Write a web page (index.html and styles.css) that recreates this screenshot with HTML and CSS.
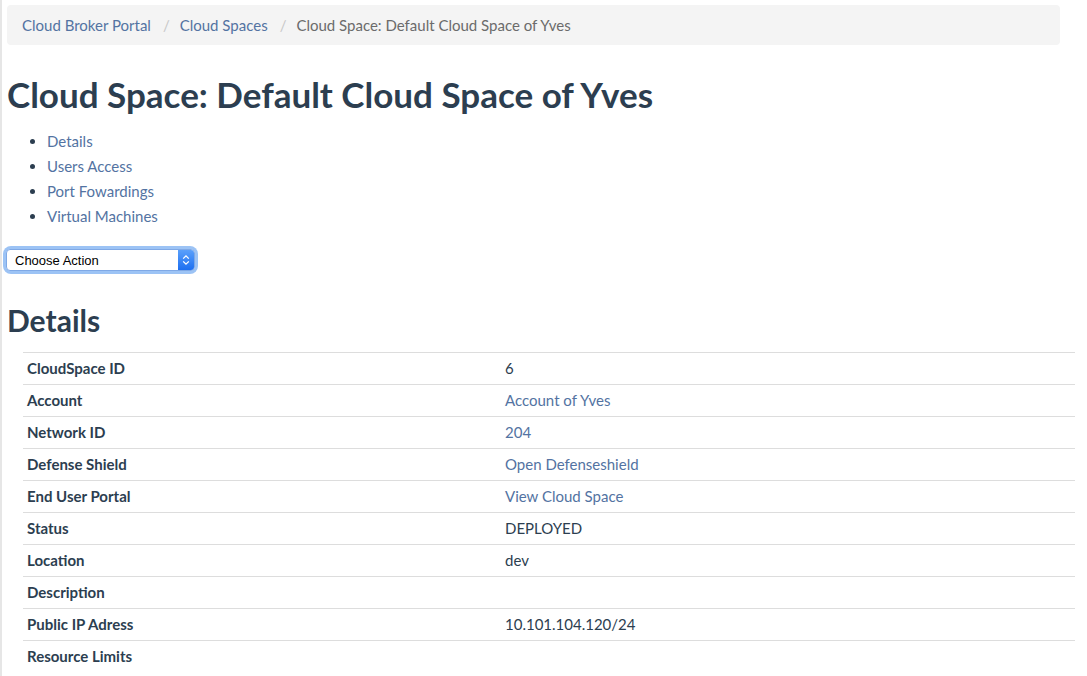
FILE: index.html
```html
<!DOCTYPE html>
<html>
<head>
<meta charset="utf-8">
<title>Cloud Space</title>
<link rel="stylesheet" href="styles.css">
</head>
<body>
<div class="page">
  <ol class="breadcrumb">
    <li><a href="#">Cloud Broker Portal</a></li>
    <li class="sep">/</li>
    <li><a href="#">Cloud Spaces</a></li>
    <li class="sep">/</li>
    <li class="active">Cloud Space: Default Cloud Space of Yves</li>
  </ol>

  <h1 class="title">Cloud Space: Default Cloud Space of Yves</h1>

  <ul class="toc">
    <li><a href="#">Details</a></li>
    <li><a href="#">Users Access</a></li>
    <li><a href="#">Port Fowardings</a></li>
    <li><a href="#">Virtual Machines</a></li>
  </ul>

  <div class="select-wrap">
    <select class="action-select">
      <option>Choose Action</option>
    </select>
    <span class="select-btn">
      <svg width="8" height="12" viewBox="0 0 8 12"><path d="M1.2 4.6 L4 1.8 L6.8 4.6" fill="none" stroke="#fff" stroke-width="1.3"/><path d="M1.2 7.4 L4 10.2 L6.8 7.4" fill="none" stroke="#fff" stroke-width="1.3"/></svg>
    </span>
  </div>

  <h2 class="section">Details</h2>

  <div class="details">
    <div class="row"><div class="k">CloudSpace ID</div><div class="v">6</div></div>
    <div class="row"><div class="k">Account</div><div class="v"><a href="#">Account of Yves</a></div></div>
    <div class="row"><div class="k">Network ID</div><div class="v"><a href="#">204</a></div></div>
    <div class="row"><div class="k">Defense Shield</div><div class="v"><a href="#">Open Defenseshield</a></div></div>
    <div class="row"><div class="k">End User Portal</div><div class="v"><a href="#">View Cloud Space</a></div></div>
    <div class="row"><div class="k">Status</div><div class="v">DEPLOYED</div></div>
    <div class="row"><div class="k">Location</div><div class="v">dev</div></div>
    <div class="row"><div class="k">Description</div><div class="v"></div></div>
    <div class="row"><div class="k">Public IP Adress</div><div class="v">10.101.104.120/24</div></div>
    <div class="row"><div class="k">Resource Limits</div><div class="v"></div></div>
  </div>
</div>
</body>
</html>
```

FILE: styles.css
```css
html, body {
  margin: 0;
  padding: 0;
  background: #fff;
}
body {
  font-family: Lato, "Open Sans", "Liberation Sans", sans-serif;
  font-size: 15px;
  color: #2c3e50;
  border-left: 2px solid #e6e6e6;
  min-height: 676px;
  box-sizing: border-box;
}
a {
  color: #5373a2;
  text-decoration: none;
}
.page {
  padding: 5px 12px 0 5px;
}
.breadcrumb {
  list-style: none;
  margin: 0 15px 0 0;
  padding: 0 15px;
  height: 40px;
  display: flex;
  align-items: center;
  background: #f4f4f4;
  border-radius: 4px;
  font-size: 15px;
}
.breadcrumb .sep {
  color: #c8c8c8;
  margin: 0 10px 0 12px;
}
.breadcrumb .active {
  color: #6b6b6b;
}
.title {
  font-size: 35px;
  font-weight: 700;
  line-height: 40px;
  margin: 29px 0 0 0;
  color: #2c3e50;
}
.toc {
  margin: 15px 0 0 0;
  padding-left: 40px;
  line-height: 25px;
  font-size: 15px;
}
.select-wrap {
  position: relative;
  display: inline-block;
  margin: 20px 0 0 -1px;
  width: 189px;
  height: 22px;
  border-radius: 5px;
  box-shadow: 0 0 0 3px #9cc3f5;
}
.action-select {
  appearance: none;
  -webkit-appearance: none;
  width: 189px;
  height: 22px;
  border: 1px solid #7fa9e6;
  border-radius: 4px;
  background: #fff;
  font-family: "Liberation Sans", Arial, sans-serif;
  font-size: 13px;
  color: #000;
  padding: 0 0 0 8px;
  margin: 0;
  outline: none;
  display: block;
}
.select-btn {
  position: absolute;
  right: 1px;
  top: 1px;
  width: 16px;
  height: 20px;
  background: linear-gradient(#5aa0fb, #1d6ff0);
  border-radius: 0 3px 3px 0;
  display: flex;
  align-items: center;
  justify-content: center;
}
.section {
  font-size: 30px;
  font-weight: 700;
  line-height: 33px;
  margin: 33px 0 0 0;
  color: #2c3e50;
}
.details {
  margin: 15px 0 0 16px;
  border-top: 1px solid #dddddd;
}
.row {
  display: grid;
  grid-template-columns: 478px 1fr;
  height: 31px;
  align-items: center;
  border-bottom: 1px solid #dddddd;
}
.row:last-child {
  border-bottom: none;
}
.k {
  font-weight: 700;
  padding: 0 0 2px 4px;
}
.v {
  padding: 0 0 2px 4px;
}
```
